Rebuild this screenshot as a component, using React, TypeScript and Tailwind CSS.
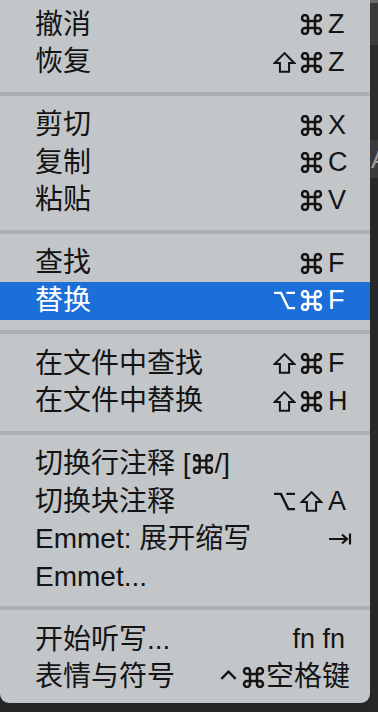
import React from 'react';

type Mod = 'cmd' | 'shift' | 'opt' | 'ctrl';

type Item = {
  label: string;
  mods?: Mod[];
  keyName?: string;
  tab?: boolean;
  active?: boolean;
};

const groups: Item[][] = [
  [
    { label: '撤消', mods: ['cmd'], keyName: 'Z' },
    { label: '恢复', mods: ['shift', 'cmd'], keyName: 'Z' },
  ],
  [
    { label: '剪切', mods: ['cmd'], keyName: 'X' },
    { label: '复制', mods: ['cmd'], keyName: 'C' },
    { label: '粘贴', mods: ['cmd'], keyName: 'V' },
  ],
  [
    { label: '查找', mods: ['cmd'], keyName: 'F' },
    { label: '替换', mods: ['opt', 'cmd'], keyName: 'F', active: true },
  ],
  [
    { label: '在文件中查找', mods: ['shift', 'cmd'], keyName: 'F' },
    { label: '在文件中替换', mods: ['shift', 'cmd'], keyName: 'H' },
  ],
  [
    { label: '切换行注释 [⌘/]' },
    { label: '切换块注释', mods: ['opt', 'shift'], keyName: 'A' },
    { label: 'Emmet: 展开缩写', tab: true },
    { label: 'Emmet...' },
  ],
  [{ label: '开始听写...' }, { label: '表情与符号' }],
];

const font = {
  fontFamily: '"Liberation Sans", "Noto Sans CJK SC", "DejaVu Sans", sans-serif',
};

function ModIcon({ m, w = 23, h = 21 }: { m: Mod; w?: number; h?: number }) {
  const common = {
    width: w,
    height: h,
    fill: 'none',
    stroke: 'currentColor',
    strokeLinecap: 'butt' as const,
    strokeLinejoin: 'miter' as const,
  };
  if (m === 'cmd')
    return (
      <svg {...common} viewBox="1.5 1.5 21 21" strokeWidth={2.5}>
        <path d="M15.5 8.5V5.5a3 3 0 1 1 3 3h-13a3 3 0 1 1 3-3v13a3 3 0 1 1-3-3h13a3 3 0 1 1-3 3z" />
      </svg>
    );
  if (m === 'shift')
    return (
      <svg {...common} viewBox="1 1 22 22" strokeWidth={2.1}>
        <path d="M12 2.2 1.8 12.5H7.2V21.8H16.8V12.5H22.2Z" />
      </svg>
    );
  if (m === 'opt')
    return (
      <svg {...common} viewBox="1 1 22 22" strokeWidth={2.5}>
        <path d="M1 4H8.3L16 20H23M14 4H23" />
      </svg>
    );
  return (
    <svg {...common} viewBox="1 1 22 22" strokeWidth={2.5}>
      <path d="M4.5 13.5 12 6l7.5 7.5" />
    </svg>
  );
}

function TabIcon() {
  return (
    <svg width={24} height={16} viewBox="0 0 24 16" fill="none" stroke="currentColor" strokeWidth={2.2}>
      <path d="M1 8H19M14 3.5 19 8l-5 4.5" />
      <path d="M22 2.5V13.5" />
    </svg>
  );
}

function Label({ text }: { text: string }) {
  // the ⌘ inside a label is drawn like the shortcut glyphs
  const parts = text.split('⌘');
  return (
    <div className="flex flex-1 items-center whitespace-nowrap text-[28px] leading-none" style={font}>
      {parts.map((p, i) => (
        <React.Fragment key={i}>
          {i > 0 && (
            <span className="mx-[1px] flex">
              <ModIcon m="cmd" w={22} h={20} />
            </span>
          )}
          <span>{p}</span>
        </React.Fragment>
      ))}
    </div>
  );
}

function Row({ item }: { item: Item }) {
  const text = item.active ? 'text-white' : 'text-[#141414]';
  return (
    <div
      className={`flex h-[37.5px] items-center pl-[35px] ${text} ${item.active ? 'bg-[#1c6fd9]' : ''}`}
    >
      <Label text={item.label} />
      {item.keyName && (
        <div className="flex items-center pr-[21px]">
          {item.mods!.map((m, i) => (
            <span key={i} className="flex w-[27px] justify-center">
              <ModIcon m={m} />
            </span>
          ))}
          <span className="ml-[3px] w-[21px] whitespace-nowrap text-[27px] leading-none" style={font}>
            {item.keyName}
          </span>
        </div>
      )}
      {item.tab && (
        <div className="flex items-center pr-[18px]">
          <TabIcon />
        </div>
      )}
      {item.label === '开始听写...' && (
        <div className="whitespace-nowrap pr-[25px] text-[27px] leading-none" style={font}>
          fn fn
        </div>
      )}
      {item.label === '表情与符号' && (
        <div className="flex items-center pr-[20px]">
          <span className="flex w-[25px] justify-center">
            <ModIcon m="ctrl" />
          </span>
          <span className="flex w-[25px] justify-center">
            <ModIcon m="cmd" />
          </span>
          <span className="whitespace-nowrap text-[28px] leading-none" style={font}>
            空格键
          </span>
        </div>
      )}
    </div>
  );
}

export default function App() {
  return (
    <div className="flex h-[712px] w-[378px] overflow-hidden bg-[#262626]">
      <div className="flex h-[703px] w-[370px] flex-col rounded-b-[9px] bg-[#c3c6c9] pt-[6px] pb-[7px]">
        {groups.map((g, gi) => (
          <React.Fragment key={gi}>
            {gi > 0 && (
              <div className="flex h-[25.5px] items-center">
                <div className="h-[4px] w-full bg-[#adb0b3]" />
              </div>
            )}
            {g.map((item, ii) => (
              <Row key={ii} item={item} />
            ))}
          </React.Fragment>
        ))}
      </div>
      <div className="flex w-[8px] flex-col">
        <div className="h-[3px] bg-[#6b6b6b]" />
        <div className="h-[42px] bg-[#3b3b3b]" />
        <div className="h-[95px] bg-[#2c2c2c]" />
        <div
          className="flex h-[38px] items-center overflow-hidden bg-[#3a3a3a] pl-[1px] text-[26px] leading-none text-[#9a9a9a]"
          style={font}
        >
          A
        </div>
        <div className="flex-1 bg-[#282828]" />
      </div>
    </div>
  );
}
